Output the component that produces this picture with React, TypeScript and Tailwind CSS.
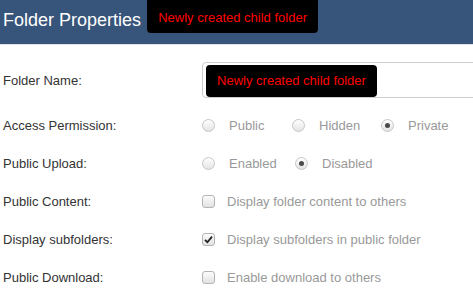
import React from 'react'

const Radio = ({ checked }: { checked?: boolean }) => (
  <span className="flex h-[13px] w-[13px] shrink-0 items-center justify-center rounded-full border border-[#c6c6c6] bg-linear-to-b from-white to-[#e4e4e4]">
    {checked && <span className="h-[5px] w-[5px] rounded-full bg-[#4a4a4a]"></span>}
  </span>
)

const Checkbox = ({ checked }: { checked?: boolean }) => (
  <span className="flex h-[13px] w-[13px] shrink-0 items-center justify-center rounded-[3px] border border-[#b4b4b4] bg-linear-to-b from-[#fcfcfc] to-[#e2e2e2]">
    {checked && (
      <svg width="9" height="9" viewBox="0 0 9 9">
        <path d="M1 4.8 L3.4 7.2 L8 1.6" fill="none" stroke="#222" strokeWidth="1.8" />
      </svg>
    )}
  </span>
)

const Row = ({ label, children }: { label: string; children: React.ReactNode }) => (
  <div className="flex h-[38px] items-center">
    <div className="w-[202px] shrink-0 pl-[3px] text-[#333]">{label}</div>
    <div className="flex items-center text-[#999]">{children}</div>
  </div>
)

const RadioOption = ({ text, checked, width }: { text: string; checked?: boolean; width?: string }) => (
  <div className={`flex items-center ${width ?? ''}`}>
    <Radio checked={checked} />
    <span className="ml-[14px]">{text}</span>
  </div>
)

const CheckOption = ({ text, checked }: { text: string; checked?: boolean }) => (
  <div className="flex items-center">
    <Checkbox checked={checked} />
    <span className="ml-[12px]">{text}</span>
  </div>
)

export default function App() {
  return (
    <div className="h-[292px] w-[473px] overflow-hidden bg-white font-['Liberation_Sans',Arial,sans-serif] text-[13px] leading-[15px]">
      {/* Header */}
      <div className="flex h-[45px] items-start border-b border-[#dfe4ea] bg-[#37547a]">
        <h1 className="mt-[11px] pl-[3px] text-[18px] leading-[18px] text-white">Folder Properties</h1>
        <div className="ml-[6px] flex h-[33px] w-[171px] justify-center rounded-b-[4px] bg-black pt-[10px] text-[#ff0000]">
          Newly created child folder
        </div>
      </div>

      {/* Form */}
      <div className="flex flex-col">
        <div className="mt-[17px] flex h-[36px] items-center">
          <div className="w-[202px] shrink-0 pl-[3px] text-[#333]">Folder Name:</div>
          <div className="flex h-[36px] w-[290px] shrink-0 items-start rounded-l-[4px] border border-[#cccccc] pl-[3px] pt-[2px]">
            <div className="flex h-[32px] w-[171px] justify-center rounded-[4px] bg-black pt-[8px] text-[#ff0000]">
              Newly created child folder
            </div>
          </div>
        </div>

        <div className="mt-[8px]">
          <Row label="Access Permission:">
            <RadioOption text="Public" width="w-[90px]" />
            <RadioOption text="Hidden" width="w-[89px]" />
            <RadioOption text="Private" checked />
          </Row>
          <Row label="Public Upload:">
            <RadioOption text="Enabled" width="w-[93px]" />
            <RadioOption text="Disabled" checked />
          </Row>
          <Row label="Public Content:">
            <CheckOption text="Display folder content to others" />
          </Row>
          <Row label="Display subfolders:">
            <CheckOption text="Display subfolders in public folder" checked />
          </Row>
          <Row label="Public Download:">
            <CheckOption text="Enable download to others" />
          </Row>
        </div>
      </div>
    </div>
  )
}
